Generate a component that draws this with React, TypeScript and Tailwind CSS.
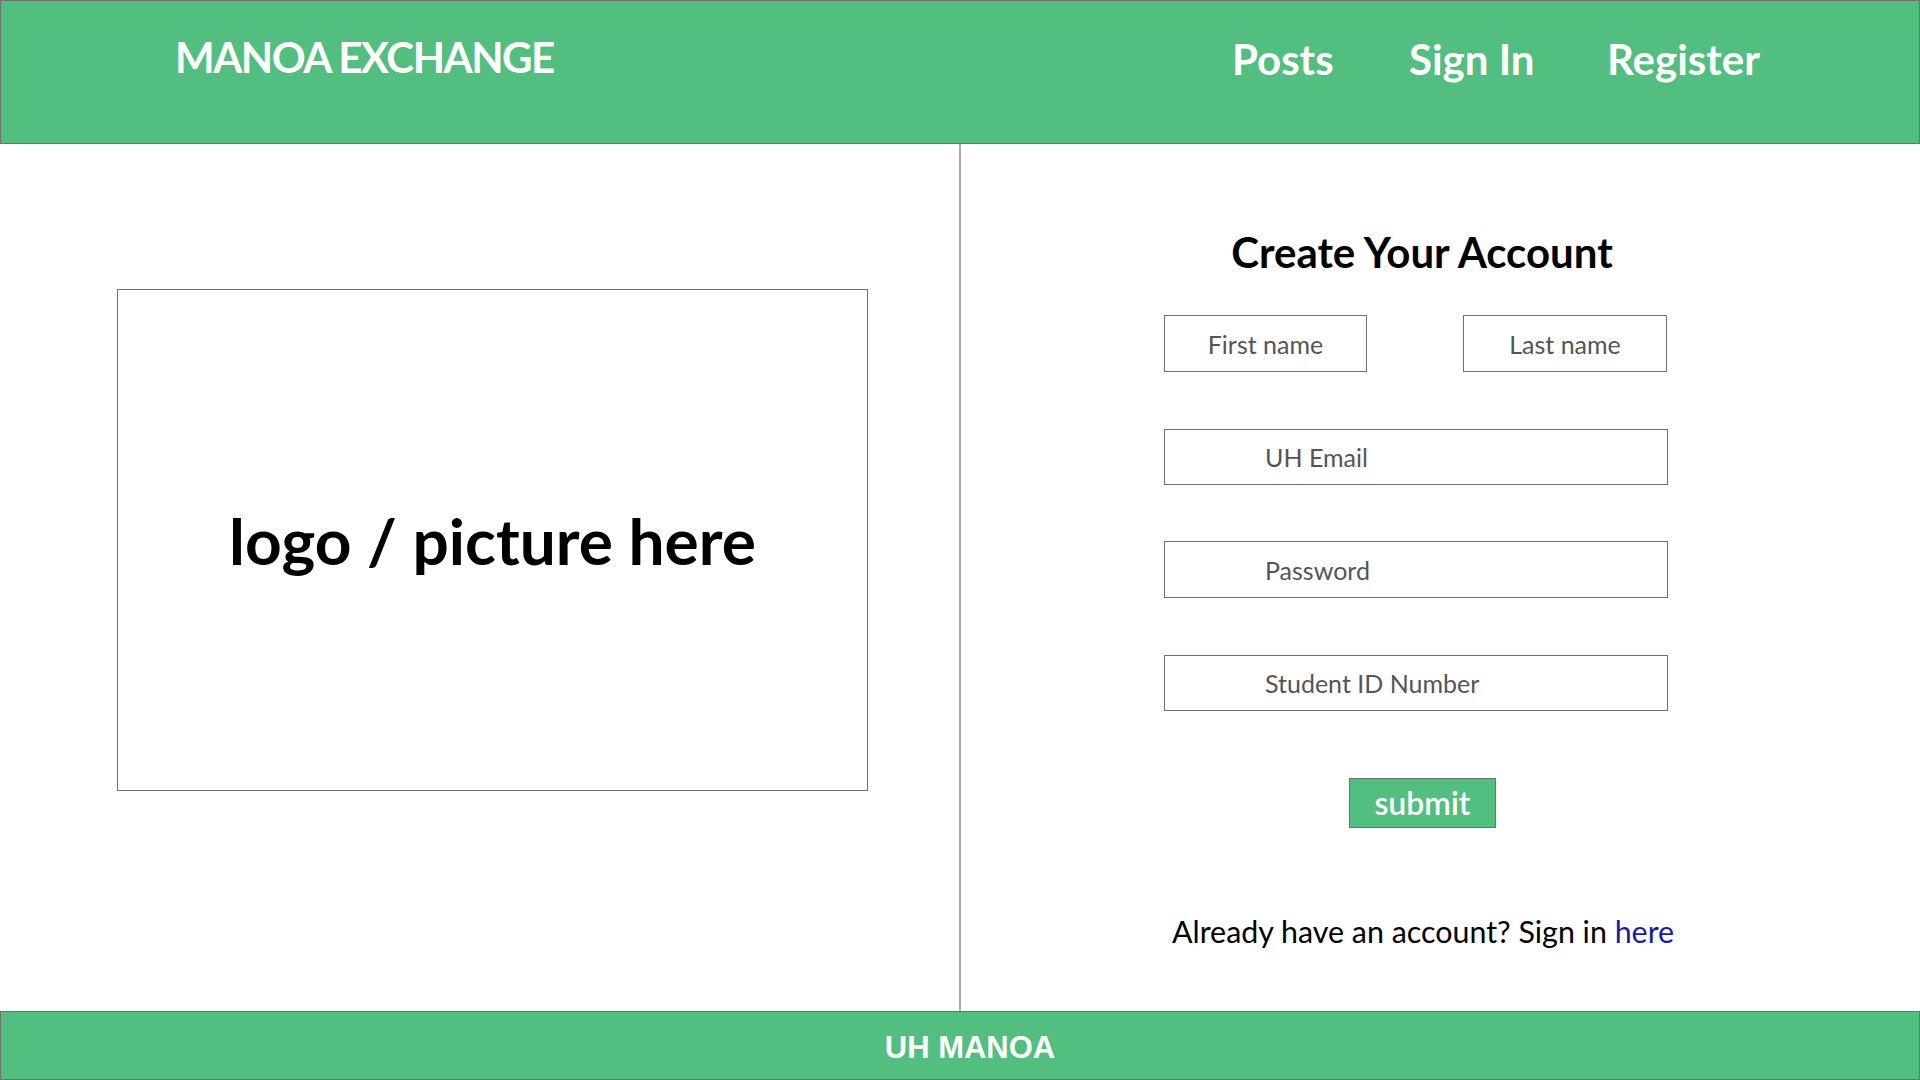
import React from "react";

export default function App() {
  return (
    <div className="w-[1920px] h-[1080px] flex flex-col bg-white font-['Lato',sans-serif] overflow-hidden">
      <header className="h-[144px] shrink-0 bg-[#52be80] border border-[#707070] flex items-start text-white">
        <div className="w-[1231px] pl-[174px] pt-[35px]">
          <h1 className="text-[42px] leading-none font-bold tracking-[-1.5px] whitespace-nowrap">MANOA EXCHANGE</h1>
        </div>
        <nav className="flex items-start pt-[37px] text-[42px] leading-none font-bold">
          <a className="w-[177px] whitespace-nowrap" href="#">Posts</a>
          <a className="w-[198px] whitespace-nowrap" href="#">Sign In</a>
          <a className="whitespace-nowrap" href="#">Register</a>
        </nav>
      </header>

      <main className="flex-1 flex min-h-0">
        <section className="w-[961px] shrink-0 border-r-2 border-[#ababab] pt-[145px] pl-[117px]">
          <div className="w-[751px] h-[502px] border border-[#707070] flex items-center justify-center">
            <span className="pt-[2px] text-[64px] leading-none font-bold text-black whitespace-nowrap">logo / picture here</span>
          </div>
        </section>

        <section className="flex-1 pl-[203px] pt-[87px]">
          <h2 className="w-[516px] text-center text-[42px] leading-none font-bold text-black whitespace-nowrap">
            Create Your Account
          </h2>
          <form className="flex flex-col" onSubmit={(e) => e.preventDefault()}>
            <div className="flex mt-[42px]">
              <input
                className="w-[203px] h-[57px] border border-[#707070] text-center text-[25px] outline-none placeholder:text-[#555]"
                placeholder="First name"
              />
              <input
                className="w-[204px] h-[57px] ml-[96px] border border-[#707070] text-center text-[25px] outline-none placeholder:text-[#555]"
                placeholder="Last name"
              />
            </div>
            <input
              className="w-[504px] h-[56px] mt-[57px] border border-[#707070] pl-[100px] text-[25px] outline-none placeholder:text-[#555]"
              placeholder="UH Email"
            />
            <input
              type="password"
              className="w-[504px] h-[57px] mt-[56px] border border-[#707070] pl-[100px] text-[25px] outline-none placeholder:text-[#555]"
              placeholder="Password"
            />
            <input
              className="w-[504px] h-[56px] mt-[57px] border border-[#707070] pl-[100px] text-[25px] outline-none placeholder:text-[#555]"
              placeholder="Student ID Number"
            />
            <button
              type="submit"
              className="w-[147px] h-[50px] mt-[67px] ml-[185px] bg-[#52be80] border border-[#707070] text-white text-[32px] font-semibold leading-none"
            >
              submit
            </button>
          </form>
          <p className="mt-[88px] ml-[8px] text-[30.4px] leading-none text-black whitespace-nowrap">
            Already have an account? Sign in <a href="#" className="text-[#1a1aa8]">here</a>
          </p>
        </section>
      </main>

      <footer className="h-[69px] shrink-0 bg-[#52be80] border border-[#707070] flex items-center justify-center">
        <span className="pl-[20px] pt-[3px] text-[31px] leading-none font-bold text-white font-['Liberation_Sans',sans-serif]">UH MANOA</span>
      </footer>
    </div>
  );
}
